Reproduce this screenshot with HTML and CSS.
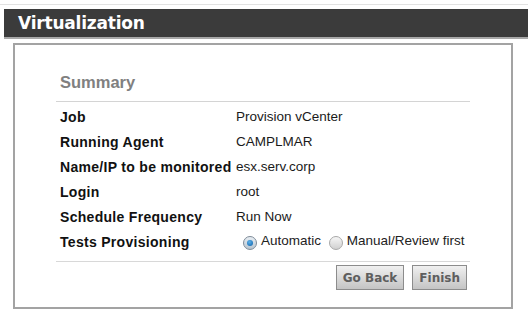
FILE: index.html
```html
<!DOCTYPE html>
<html lang="en">
<head>
  <meta charset="UTF-8">
  <title>Virtualization</title>
  <link rel="stylesheet" href="styles.css">
</head>
<body>
  <div class="topline"></div>
  <div class="header">Virtualization</div>
  <div class="panel">
    <div class="summary">
      <h2>Summary</h2>
      <table class="details">
        <tr><td class="label">Job</td><td>Provision vCenter</td></tr>
        <tr><td class="label">Running Agent</td><td>CAMPLMAR</td></tr>
        <tr><td class="label">Name/IP to be monitored</td><td>esx.serv.corp</td></tr>
        <tr><td class="label">Login</td><td>root</td></tr>
        <tr><td class="label">Schedule Frequency</td><td>Run Now</td></tr>
        <tr class="radio-row">
          <td class="label">Tests Provisioning</td>
          <td>
            <label class="radio"><span class="dot checked"></span>Automatic</label>
            <label class="radio"><span class="dot"></span>Manual/Review first</label>
          </td>
        </tr>
      </table>
      <div class="actions">
        <button>Go Back</button>
        <button>Finish</button>
      </div>
    </div>
  </div>
</body>
</html>
```

FILE: styles.css
```css
body {
  margin: 0;
  background-color: #fff;
  font-family: "Liberation Sans", Arial, sans-serif;
}
.topline {
  height: 1px;
  margin-top: 4px;
  background-color: #e2e2e2;
}
.header {
  margin: 4px 0 0 4px;
  height: 28px;
  line-height: 28px;
  padding-left: 14px;
  background-color: #3b3b3b;
  border-bottom: 2px solid #a8a8a8;
  color: #fff;
  font-family: "DejaVu Sans", Verdana, sans-serif;
  font-weight: bold;
  font-size: 17px;
  letter-spacing: -0.2px;
}
.panel {
  margin: 4px 0 0 13px;
  width: 496px;
  height: 262px;
  border: 2px solid #a3a3a3;
  box-sizing: content-box;
}
.summary {
  margin-left: 41px;
  width: 414px;
}
h2 {
  margin: 0;
  padding: 25px 0 0 4px;
  height: 31px;
  line-height: 24px;
  font-family: "Liberation Sans", Arial, sans-serif;
  font-size: 16.5px;
  color: #808080;
  border-bottom: 1px solid #d4d4d4;
}
.details {
  border-collapse: collapse;
  margin-top: 2px;
  font-size: 13.5px;
  color: #1a1a1a;
}
.details td {
  height: 25px;
  padding: 0;
  vertical-align: middle;
}
.details .label {
  width: 176px;
  padding-left: 4px;
  font-weight: bold;
  font-size: 14px;
  letter-spacing: 0.3px;
  color: #111;
}
.radio {
  display: inline-flex;
  align-items: center;
  margin-left: 7px;
  color: #222;
}
.radio + .radio {
  margin-left: 4px;
}
.dot {
  width: 14px;
  height: 14px;
  margin: 6px 4px 0 0;
  border-radius: 50%;
  border: 1px solid #a9a9a9;
  background: linear-gradient(#f6f6f6, #d0d0d0);
  box-sizing: border-box;
  position: relative;
}
.dot.checked {
  border-color: #7f8c99;
  background: linear-gradient(#e8eef4, #b8c4cf);
}
.dot.checked::after {
  content: "";
  position: absolute;
  left: 3px;
  top: 3px;
  width: 6px;
  height: 6px;
  border-radius: 50%;
  background: radial-gradient(circle at 40% 35%, #5db2ea, #0b5fa8);
}
.actions {
  border-top: 1px solid #d8d8d8;
  margin-top: 7px;
  padding-top: 3px;
  display: flex;
  justify-content: flex-end;
  gap: 8px;
  padding-right: 3px;
}
button {
  height: 25px;
  padding: 0 6px;
  border: 1px solid #8c8c8c;
  background: linear-gradient(#f0f0f0, #c4c4c4);
  color: #5e5e5e;
  font-family: "DejaVu Sans", Tahoma, sans-serif;
  font-weight: bold;
  font-size: 12px;
}
```
